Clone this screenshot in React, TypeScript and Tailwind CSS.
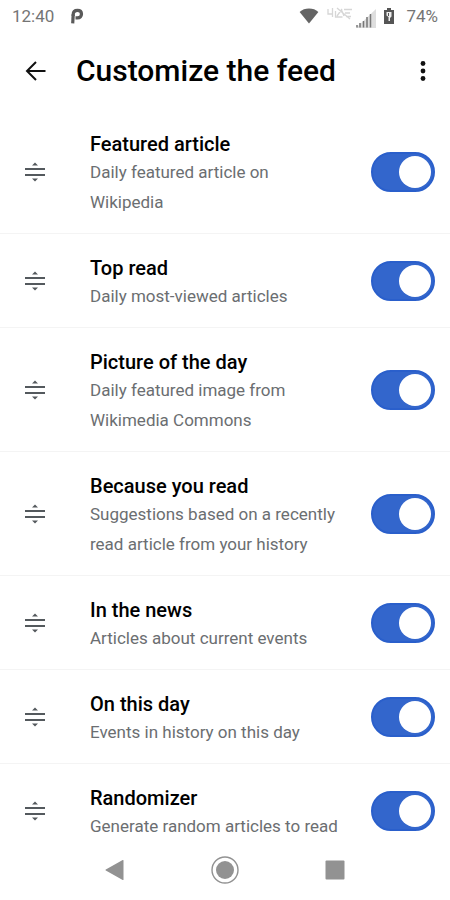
import React, { useState } from 'react';

type FeedItem = {
  id: string;
  title: string;
  description: string;
};

const FEED_ITEMS: FeedItem[] = [
  { id: 'featured', title: 'Featured article', description: 'Daily featured article on Wikipedia' },
  { id: 'top-read', title: 'Top read', description: 'Daily most-viewed articles' },
  { id: 'picture', title: 'Picture of the day', description: 'Daily featured image from Wikimedia Commons' },
  { id: 'because', title: 'Because you read', description: 'Suggestions based on a recently read article from your history' },
  { id: 'news', title: 'In the news', description: 'Articles about current events' },
  { id: 'on-this-day', title: 'On this day', description: 'Events in history on this day' },
  { id: 'randomizer', title: 'Randomizer', description: 'Generate random articles to read' },
];

const StatusBar: React.FC = () => (
  <div className="flex h-8 shrink-0 items-center justify-between px-3 text-[17px] leading-5 text-[#757575]">
    <div className="flex items-center gap-4">
      <span>12:40</span>
      <svg width="14" height="16" viewBox="0 0 14 16" fill="none" stroke="#5a5a5a" aria-hidden="true">
        <path d="M3.200 8V6.500C3.200 3.800 5 2.300 7.500 2.300s4 1.500 4 3.700-1.500 3.900-4 3.900H5.500" strokeWidth="3.200" />
        <path d="M2.700 15.300l.5-9" strokeWidth="3.200" />
      </svg>
    </div>
    <div className="flex items-center">
      <svg width="20" height="16" viewBox="0 0 20 16" fill="#646464" aria-hidden="true">
        <path d="M10 15.5 .6 4C3.200 1.600 6.300.5 10 .5s6.800 1.100 9.400 3.500z" />
      </svg>
      <svg className="mb-1 ml-2" width="25" height="14" viewBox="0 0 25 14" fill="none" stroke="#d6d6d6" strokeWidth="1.300" aria-hidden="true">
        <path d="M1 2v5h5M5.500 1v9M8.500 4v6h7M10 1l13 11M10 9l5-7M14.500 3l2.500 6M17 2.500h8M18 6h5M19 9.500h5" />
      </svg>
      <svg className="mt-1 ml-1" width="20" height="20" viewBox="0 0 20 20" aria-hidden="true">
        <path d="M0 20 20 1v19z" fill="#dedede" />
        <path d="M1 19.500V17M4 19.500V15M7.500 19.500V13M11 19.500V9M14.500 19.500V6" stroke="#777" strokeWidth="1.500" />
      </svg>
      <svg className="ml-2" width="10" height="16" viewBox="0 0 10 16" aria-hidden="true">
        <path d="M3 0h4v2h3v14H0V2h3z" fill="#555" />
        <path d="M2.500 4h5v4.500L6 10v3H4.500V9L2.500 7.500z" fill="#eee" />
        <path d="M4.500 5v3" stroke="#555" />
      </svg>
      <span className="ml-3">74%</span>
    </div>
  </div>
);

const DragHandle: React.FC = () => (
  <svg width="22" height="20" viewBox="0 0 22 20" fill="#54595d" aria-hidden="true">
    <path d="M11 .5l3 3H8zM11 19.500l-3-3h6zM1 6h20v2H1zM1 12h20v2H1z" />
  </svg>
);

const FeedRow: React.FC<{ item: FeedItem }> = ({ item }) => {
  const [enabled, setEnabled] = useState(true);

  return (
    <li className="flex items-center border-b border-[#f4f4f4] pl-6 pr-[15px]">
      <button type="button" aria-label={`Reorder ${item.title}`} className="shrink-0">
        <DragHandle />
      </button>
      <label htmlFor={item.id} className="ml-11 flex-1 pt-[21px] pb-4">
        <span className="block text-[20px] leading-[26px] font-medium text-black">{item.title}</span>
        <span className="block text-[17px] leading-[30px] text-[#6b6e71]">{item.description}</span>
      </label>
      <input
        id={item.id}
        type="checkbox"
        role="switch"
        checked={enabled}
        onChange={(e) => setEnabled(e.target.checked)}
        className="ml-7 h-10 w-16 shrink-0 cursor-pointer appearance-none rounded-full border-2 border-[#aaa] bg-[#c8ccd1] p-[2px] before:block before:size-8 before:rounded-full before:bg-white checked:border-[#2a5fcb] checked:bg-[#3366cc] checked:before:ml-auto"
      />
    </li>
  );
};

const NavigationBar: React.FC = () => (
  <nav className="flex h-[60px] shrink-0 items-center justify-center gap-[82px] bg-white">
    <button type="button" aria-label="Back">
      <svg width="28" height="28" viewBox="0 0 28 28" fill="#929292">
        <path d="M22.500 4.500v19q0 .8-.8.4L4.800 14.500q-.9-.5 0-1L21.700 4.100q.8-.4.800.4z" />
      </svg>
    </button>
    <button type="button" aria-label="Home">
      <svg width="28" height="28" viewBox="0 0 28 28">
        <circle cx="14" cy="14" r="13" fill="none" stroke="#929292" strokeWidth="1.400" />
        <circle cx="14" cy="14" r="9" fill="#929292" />
      </svg>
    </button>
    <button type="button" aria-label="Recent apps">
      <svg width="28" height="28" viewBox="0 0 28 28" fill="#929292">
        <rect x="4.500" y="4.500" width="19" height="19" rx="1" />
      </svg>
    </button>
  </nav>
);

export default function App() {
  return (
    <div className="flex h-screen flex-col overflow-hidden bg-white font-['Roboto',sans-serif]">
      <StatusBar />
      <header className="flex shrink-0 items-center py-[21px] pr-4 pl-6">
        <button type="button" aria-label="Navigate up">
          <svg width="22" height="22" viewBox="0 0 22 22" fill="none" stroke="#111" strokeWidth="2">
            <path d="M21.500 11H3.500M12 2 3 11l9 9" />
          </svg>
        </button>
        <h1 className="ml-[30px] flex-1 text-[30px] leading-9 font-medium text-black">Customize the feed</h1>
        <button type="button" aria-label="More options">
          <svg width="22" height="22" viewBox="0 0 22 22" fill="#111">
            <circle cx="11" cy="3.500" r="2.400" />
            <circle cx="11" cy="11" r="2.400" />
            <circle cx="11" cy="18.500" r="2.400" />
          </svg>
        </button>
      </header>
      <main className="min-h-0 flex-1 overflow-hidden">
        <ul>
          {FEED_ITEMS.map((item) => (
            <FeedRow key={item.id} item={item} />
          ))}
        </ul>
      </main>
      <NavigationBar />
    </div>
  );
}
